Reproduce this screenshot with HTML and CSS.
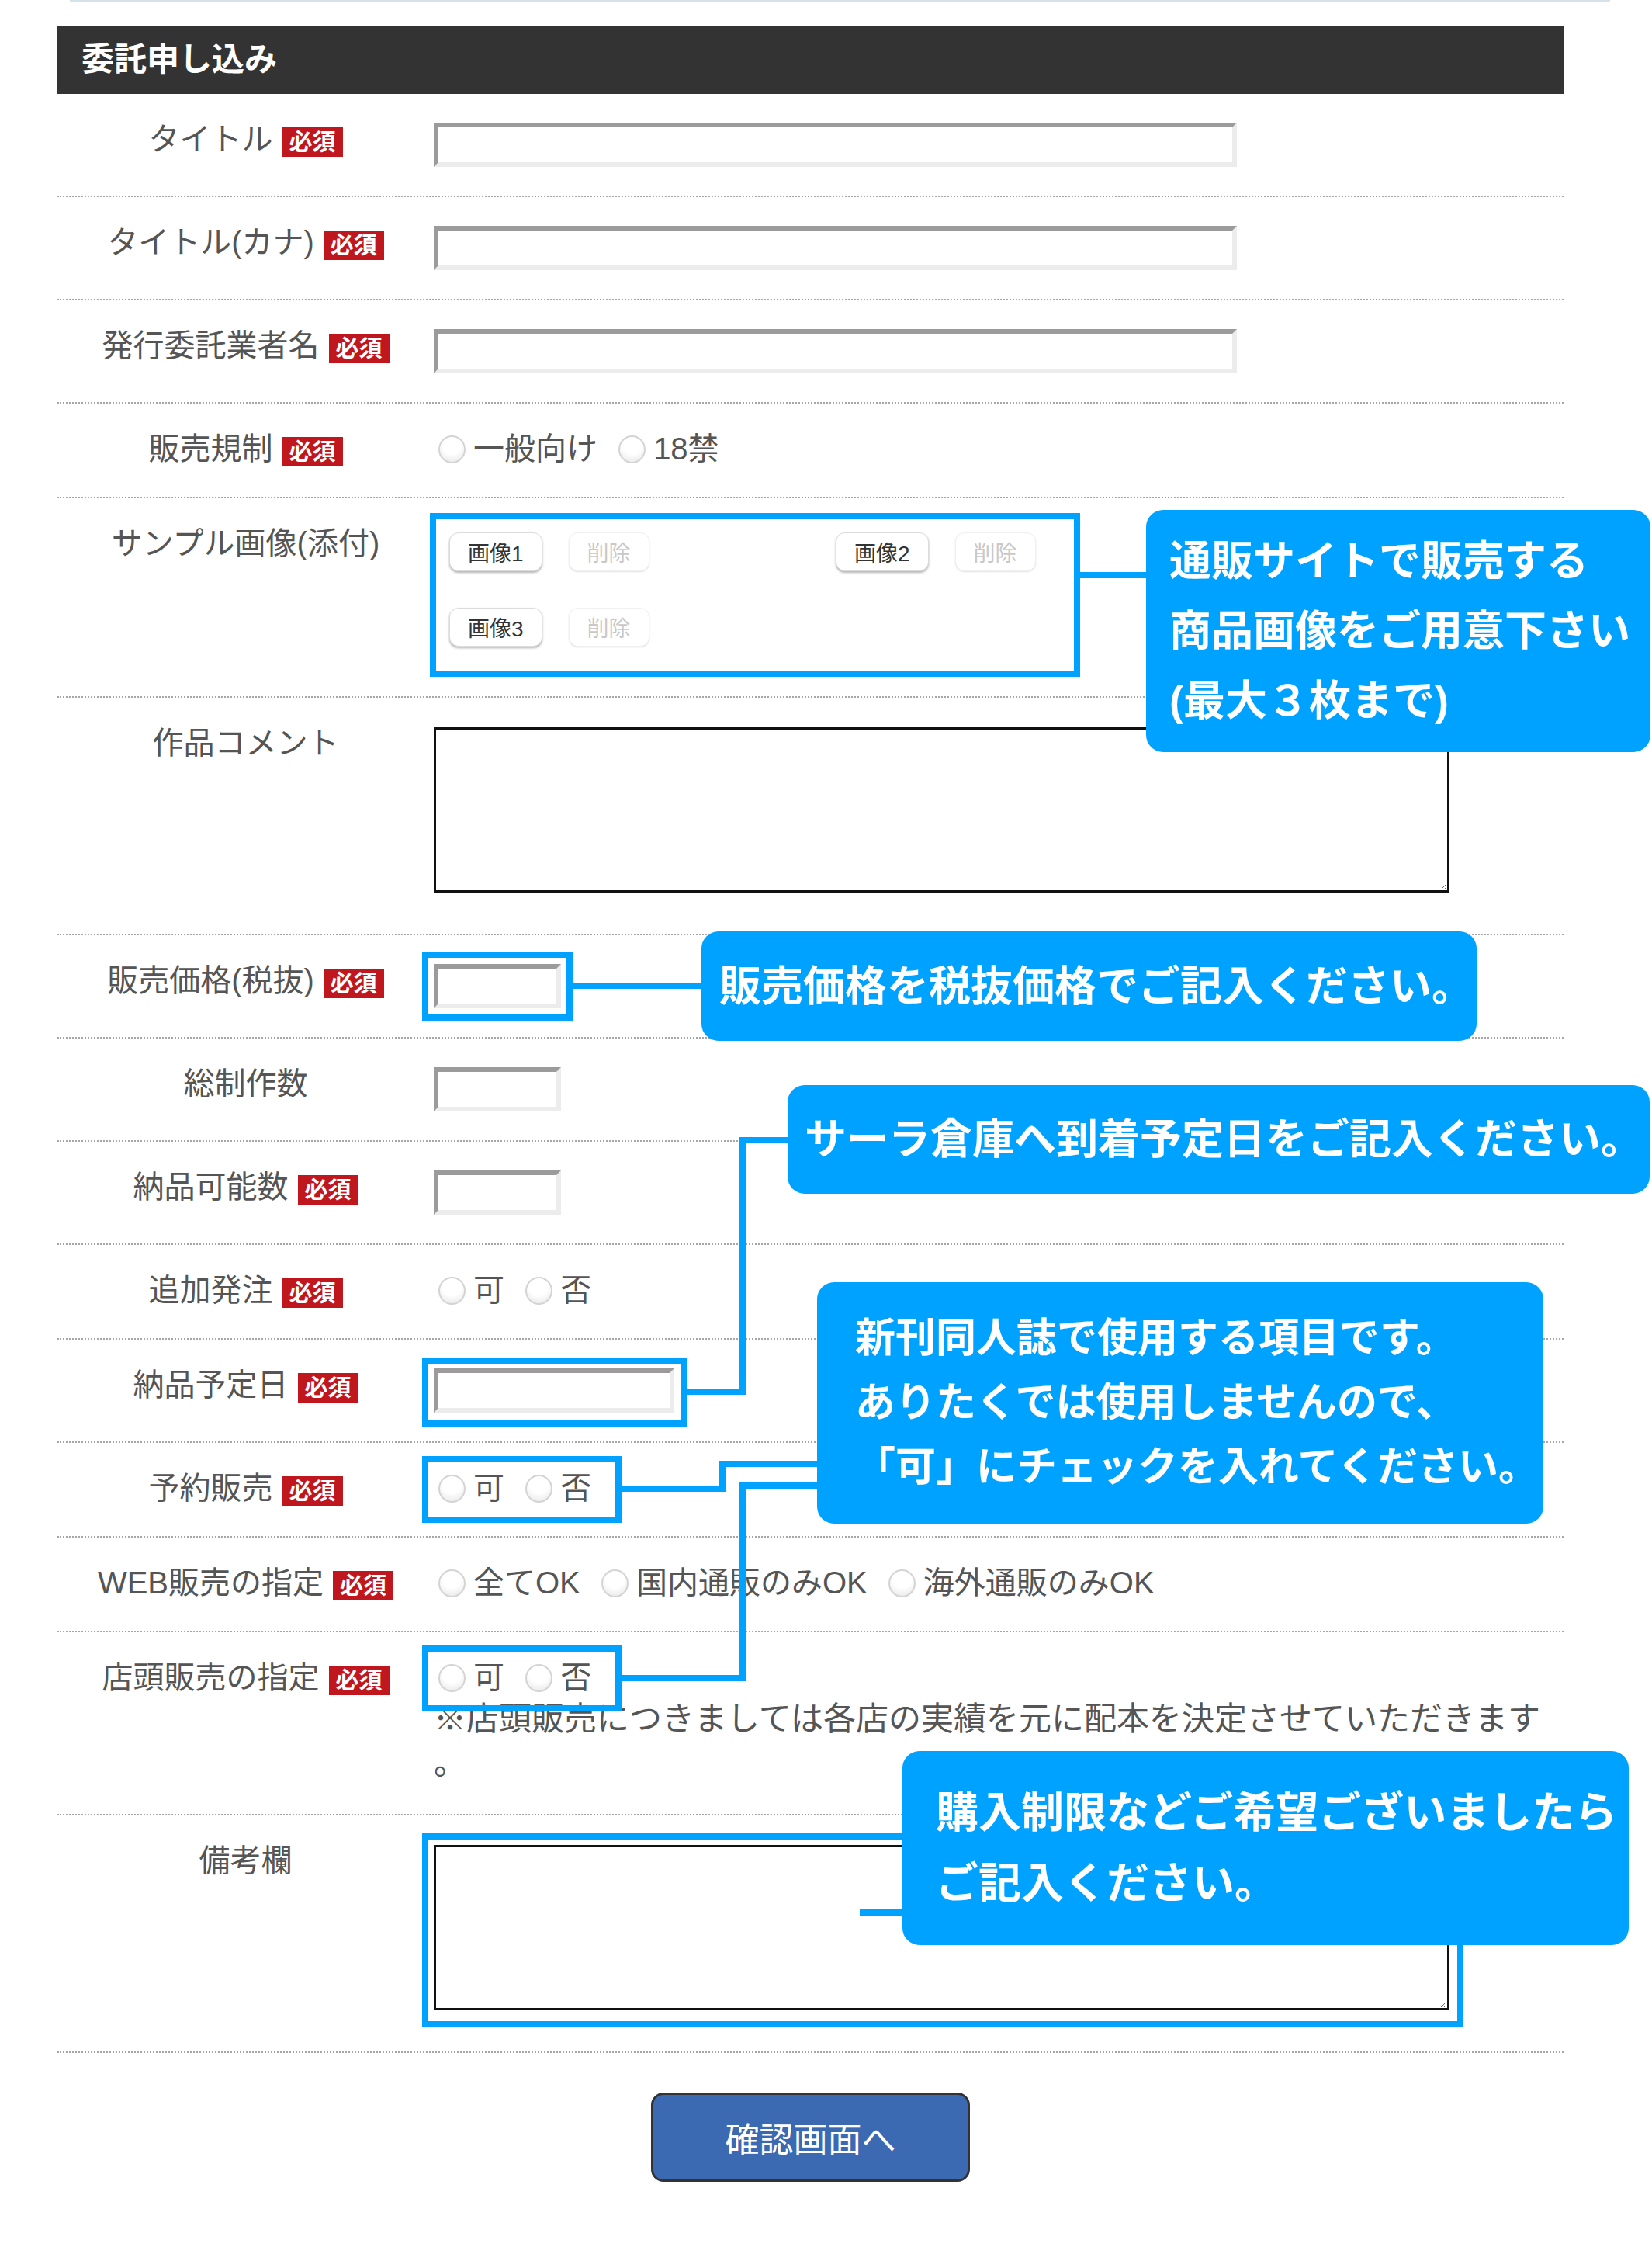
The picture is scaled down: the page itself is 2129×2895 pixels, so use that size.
FILE: index.html
```
<!DOCTYPE html>
<html lang="ja">
<head>
    <meta charset="UTF-8">
    <meta name="viewport" content="width=device-width, initial-scale=1.0">
    <title>委託申し込み</title>
    <link rel="stylesheet" href="styles.css">
</head>
<body>
<div class="page">
    <div class="top-rule"></div>

    <section class="entry">
        <h2 class="entry-title">委託申し込み</h2>

        <form class="entry-form">
            <div class="row">
                <div class="label">タイトル<span class="req">必須</span></div>
                <div class="field"><input type="text" class="text long"></div>
            </div>
            <div class="row">
                <div class="label">タイトル(カナ)<span class="req">必須</span></div>
                <div class="field"><input type="text" class="text long"></div>
            </div>
            <div class="row">
                <div class="label">発行委託業者名<span class="req">必須</span></div>
                <div class="field"><input type="text" class="text long"></div>
            </div>
            <div class="row">
                <div class="label">販売規制<span class="req">必須</span></div>
                <div class="field">
                    <label class="choice"><input type="radio" name="rating">一般向け</label>
                    <label class="choice"><input type="radio" name="rating">18禁</label>
                </div>
            </div>
            <div class="row">
                <div class="label">サンプル画像(添付)</div>
                <div class="field">
                    <div class="images">
                        <div class="slot"><button type="button" class="btn-pick">画像1</button><button type="button" class="btn-del" disabled>削除</button></div>
                        <div class="slot"><button type="button" class="btn-pick">画像2</button><button type="button" class="btn-del" disabled>削除</button></div>
                        <div class="slot"><button type="button" class="btn-pick">画像3</button><button type="button" class="btn-del" disabled>削除</button></div>
                    </div>
                </div>
            </div>
            <div class="row">
                <div class="label">作品コメント</div>
                <div class="field"><textarea class="memo"></textarea></div>
            </div>
            <div class="row">
                <div class="label">販売価格(税抜)<span class="req">必須</span></div>
                <div class="field"><input type="text" class="text short"></div>
            </div>
            <div class="row">
                <div class="label">総制作数</div>
                <div class="field"><input type="text" class="text short"></div>
            </div>
            <div class="row">
                <div class="label">納品可能数<span class="req">必須</span></div>
                <div class="field"><input type="text" class="text short"></div>
            </div>
            <div class="row">
                <div class="label">追加発注<span class="req">必須</span></div>
                <div class="field">
                    <label class="choice"><input type="radio" name="reorder">可</label>
                    <label class="choice"><input type="radio" name="reorder">否</label>
                </div>
            </div>
            <div class="row">
                <div class="label">納品予定日<span class="req">必須</span></div>
                <div class="field"><input type="text" class="text date"></div>
            </div>
            <div class="row">
                <div class="label">予約販売<span class="req">必須</span></div>
                <div class="field">
                    <label class="choice"><input type="radio" name="reserve">可</label>
                    <label class="choice"><input type="radio" name="reserve">否</label>
                </div>
            </div>
            <div class="row">
                <div class="label">WEB販売の指定<span class="req">必須</span></div>
                <div class="field">
                    <label class="choice"><input type="radio" name="web">全てOK</label>
                    <label class="choice"><input type="radio" name="web">国内通販のみOK</label>
                    <label class="choice"><input type="radio" name="web">海外通販のみOK</label>
                </div>
            </div>
            <div class="row">
                <div class="label">店頭販売の指定<span class="req">必須</span></div>
                <div class="field">
                    <label class="choice"><input type="radio" name="store">可</label>
                    <label class="choice"><input type="radio" name="store">否</label>
                    <p class="note">※店頭販売につきましては各店の実績を元に配本を決定させていただきます。</p>
                </div>
            </div>
            <div class="row">
                <div class="label">備考欄</div>
                <div class="field"><textarea class="memo"></textarea></div>
            </div>

            <div class="actions">
                <button type="button" class="btn-confirm">確認画面へ</button>
            </div>
        </form>
    </section>

    <!-- annotations laid over the form -->
    <div class="notes">
        <div class="mark mark-images"></div>
        <div class="mark mark-price"></div>
        <div class="mark mark-date"></div>
        <div class="mark mark-reserve"></div>
        <div class="mark mark-store"></div>
        <div class="mark mark-remarks"></div>

        <svg class="leaders" width="2129" height="2895" viewBox="0 0 2129 2895">
            <polyline points="1392,741 1477,741" />
            <polyline points="738,1270 904,1270" />
            <polyline points="886,1793 957,1793 957,1469 1015,1469" />
            <polyline points="801,1918 931,1918 931,1886 1053,1886" />
            <polyline points="801,2162 957,2162 957,1914 1053,1914" />
            <polyline points="1108,2464 1163,2464" />
        </svg>

        <div class="bubble bubble-images">通販サイトで販売する<br>商品画像をご用意下さい<br>(最大３枚まで)</div>
        <div class="bubble bubble-price">販売価格を税抜価格でご記入ください。</div>
        <div class="bubble bubble-date">サーラ倉庫へ到着予定日をご記入ください。</div>
        <div class="bubble bubble-reserve">新刊同人誌で使用する項目です。<br>ありたくでは使用しませんので、<br>「可」にチェックを入れてください。</div>
        <div class="bubble bubble-remarks">購入制限などご希望ございましたら<br>ご記入ください。</div>
    </div>
</div>
</body>
</html>
```

FILE: styles.css
```
body {
    margin: 0;
    font-family: "Liberation Sans", "Noto Sans CJK JP", sans-serif;
    color: #555;
    background: #fff;
}

.page {
    position: relative;
    width: 2129px;
    min-height: 2895px;
}

.top-rule {
    height: 3px;
    margin: 0 54px 0 90px;
    background: #d5e2ea;
    border-radius: 0 0 8px 8px;
}

/* Form block */
.entry {
    width: 1941px;
    margin: 30px 0 0 74px;
}

.entry-title {
    margin: 0;
    height: 88px;
    line-height: 88px;
    padding-left: 31px;
    background: #333;
    color: #fff;
    font-size: 42px;
    font-weight: bold;
}

.row {
    display: grid;
    grid-template-columns: 485px 1fr;
    align-items: start;
    padding: 34px 0 37px;
    border-bottom: 2px dotted #a6a6a6;
}

.label {
    font-size: 40px;
    line-height: 49px;
    text-align: center;
    color: #555;
}

.req {
    display: inline-block;
    height: 38px;
    margin-left: 12px;
    padding: 0 9px;
    line-height: 38px;
    font-size: 30px;
    font-weight: bold;
    color: #fff;
    background: #c0161d;
}

.field {
    font-size: 40px;
    line-height: 49px;
    color: #555;
}

.text {
    display: block;
    box-sizing: border-box;
    height: 57px;
    margin: 3px 0 0;
    padding: 0 8px;
    border: 6px solid;
    border-color: #9b9b9b #ececec #ececec #9b9b9b;
    background: #fff;
    font-size: 28px;
}

.text.long { width: 1035px; }
.text.short { width: 164px; }
.text.date { width: 310px; }

.choice {
    margin-right: 10px;
    white-space: nowrap;
}

.choice input {
    -webkit-appearance: none;
    appearance: none;
    box-sizing: border-box;
    width: 35px;
    height: 36px;
    margin: 0 10px 0 6px;
    vertical-align: -5px;
    border: 2px solid #d4d4d4;
    border-radius: 50%;
    background: radial-gradient(circle at 50% 30%, #fff 45%, #e4e4e4 100%);
}

/* Sample images */
.images {
    display: grid;
    grid-template-columns: 498px 498px;
    row-gap: 47px;
    padding: 10px 0 27px 20px;
}

.slot {
    display: flex;
    gap: 34px;
}

.btn-pick,
.btn-del {
    height: 50px;
    padding: 0 23px;
    font-family: inherit;
    font-size: 28px;
    background: #fff;
    border-radius: 12px;
}

.btn-pick {
    color: #333;
    border: 1px solid #dcdcdc;
    box-shadow: 0 2px 3px rgba(0, 0, 0, 0.3);
}

.btn-del {
    color: #c8c8c8;
    border: 1px solid #f0f0f0;
    box-shadow: 0 1px 2px rgba(0, 0, 0, 0.12);
}

.memo {
    display: block;
    box-sizing: border-box;
    width: 1309px;
    height: 213px;
    margin: 4px 0 16px;
    border: 3px solid #111;
    background: #fff;
}

.note {
    margin: 0;
    font-size: 42px;
    line-height: 57px;
    line-break: anywhere;
}

.actions {
    padding-top: 51px;
    text-align: center;
}

.btn-confirm {
    width: 411px;
    height: 115px;
    border: 3px solid #333;
    border-radius: 16px;
    background: #3c6ab2;
    color: #fff;
    font-family: inherit;
    font-size: 44px;
}

/* Annotations */
.notes {
    position: absolute;
    left: 0;
    top: 0;
    width: 2129px;
    height: 2895px;
    pointer-events: none;
}

.mark {
    position: absolute;
    box-sizing: border-box;
    border: 8px solid #00a2ff;
}

.mark-images { left: 554px; top: 661px; width: 838px; height: 211px; }
.mark-price { left: 544px; top: 1226px; width: 194px; height: 89px; }
.mark-date { left: 544px; top: 1749px; width: 342px; height: 89px; }
.mark-reserve { left: 544px; top: 1876px; width: 257px; height: 86px; }
.mark-store { left: 544px; top: 2120px; width: 257px; height: 85px; }
.mark-remarks { left: 544px; top: 2362px; width: 1342px; height: 250px; }

.leaders {
    position: absolute;
    left: 0;
    top: 0;
}

.leaders polyline {
    fill: none;
    stroke: #00a2ff;
    stroke-width: 8;
}

.bubble {
    position: absolute;
    box-sizing: border-box;
    display: flex;
    align-items: center;
    background: #00a2ff;
    border-radius: 22px;
    color: #fff;
    font-size: 54px;
    font-weight: bold;
    line-height: 90px;
    white-space: nowrap;
}

.bubble-images { left: 1477px; top: 657px; width: 650px; height: 312px; padding-left: 30px; }
.bubble-price { left: 904px; top: 1200px; width: 999px; height: 141px; padding-left: 23px; }
.bubble-date { left: 1015px; top: 1398px; width: 1111px; height: 140px; padding-left: 22px; }

.bubble-reserve {
    left: 1053px;
    top: 1652px;
    width: 936px;
    height: 311px;
    padding-left: 49px;
    font-size: 52px;
    line-height: 83px;
}

.bubble-remarks {
    left: 1163px;
    top: 2256px;
    width: 936px;
    height: 250px;
    padding-left: 43px;
    font-size: 55px;
    line-height: 91px;
}
```
